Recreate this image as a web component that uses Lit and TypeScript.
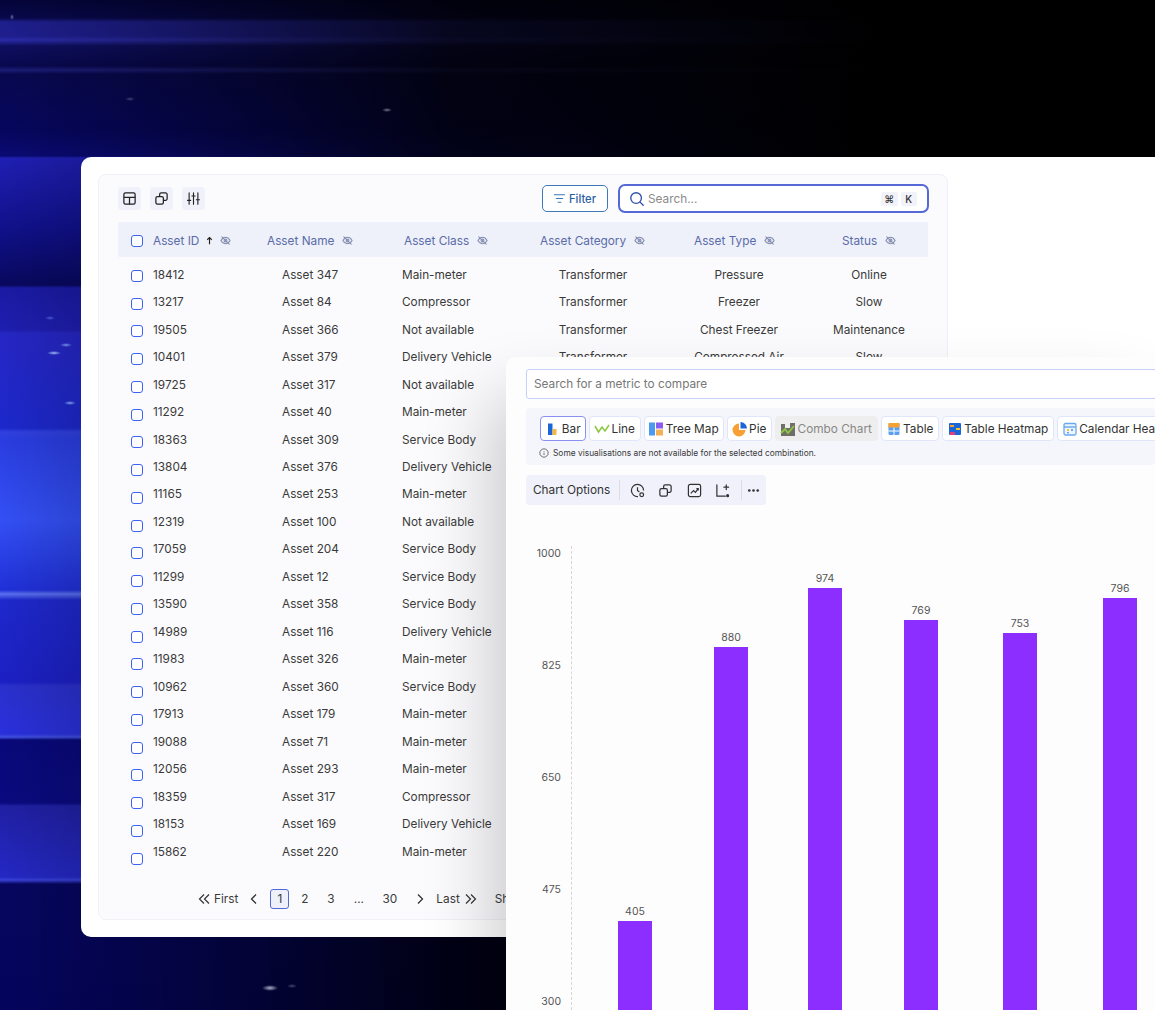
import { css, html, svg, LitElement } from "lit";
import { customElement } from "lit/decorators.js";

const ids = [18412, 13217, 19505, 10401, 19725, 11292, 18363, 13804, 11165, 12319, 17059, 11299, 13590, 14989, 11983, 10962, 17913, 19088, 12056, 18359, 18153, 15862];
const names = [347, 84, 366, 379, 317, 40, 309, 376, 253, 100, 204, 12, 358, 116, 326, 360, 179, 71, 293, 317, 169, 220];
const M = "Main-meter", C = "Compressor", N = "Not available", D = "Delivery Vehicle", S = "Service Body";
const classes = [M, C, N, D, N, M, S, D, M, N, S, S, S, D, M, S, M, M, M, C, D, M];
const types = ["Pressure", "Freezer", "Chest Freezer", "Compressed Air"];
const statuses = ["Online", "Slow", "Maintenance", "Slow"];
const headers = ["Asset Name", "Asset Class", "Asset Category", "Asset Type", "Status"];
const bars = [
  { value: 405, top: 921, gap: 46 },
  { value: 880, top: 647, gap: 62 },
  { value: 974, top: 588, gap: 60 },
  { value: 769, top: 620, gap: 62 },
  { value: 753, top: 633, gap: 65 },
  { value: 796, top: 598, gap: 66 },
];

const eye = html`<svg class="eye" viewBox="0 0 24 24" fill="none" stroke="currentColor" stroke-width="2.4" stroke-linecap="round"><path d="M2 12s4-7 10-7 10 7 10 7-4 7-10 7-10-7-10-7z" /><circle cx="12" cy="12" r="3" /><path d="M4 4l16 16" /></svg>`;
const copy = (c = "i15") => html`<svg class=${c} viewBox="0 0 24 24" fill="none" stroke="currentColor" stroke-width="2" stroke-linejoin="round"><rect x="3" y="9" width="12" height="12" rx="2.5" /><path d="M9 9V5.5A2.5 2.5 0 0 1 11.5 3h7A2.5 2.5 0 0 1 21 5.500v7a2.500 2.500 0 0 1-2.500 2.500H15" /></svg>`;

const chipIcons = {
  bar: svg`<rect x="4" y="2.500" width="4.500" height="11.500" fill="#1a66d8" /><rect x="8.500" y="8" width="4" height="6" fill="#f4b740" />`,
  line: svg`<path d="M1 5l3.500 6L8 6l3 4 4-6" fill="none" stroke="#8cc63f" stroke-width="1.500" />`,
  tree: svg`<rect x="1" y="1.500" width="6" height="13" fill="#4a9af0" /><rect x="8" y="1.500" width="7" height="6" fill="#8a5cf0" /><rect x="8" y="8.500" width="7" height="6" fill="#f4b054" />`,
  pie: svg`<path d="M7 2.500a6.500 6.500 0 1 0 6.500 6.500H7z" fill="#f7a134" /><path d="M8.500 1a6.500 6.500 0 0 1 6.500 6.500H8.500z" fill="#1a66d8" />`,
  combo: svg`<rect x="1" y="3" width="4" height="12" fill="#6f6f68" /><rect x="5" y="7" width="5" height="8" fill="#6f6f68" /><rect x="10" y="2" width="5" height="13" fill="#6f6f68" /><path d="M1 12l4-4 3 4 6-7" fill="none" stroke="#8cc63f" stroke-width="1.800" />`,
  table: svg`<rect x="2.500" y="2" width="11" height="12" rx="1.500" fill="#5aa0f0" /><rect x="2.500" y="2" width="11" height="4.500" fill="#f7a134" /><path d="M2.500 10h11M8 6.500V14" stroke="#fff" />`,
  heat: svg`<rect x="2" y="2" width="12" height="12" rx="1" fill="#1a66d8" /><rect x="3" y="4" width="4" height="2" fill="#f7a134" /><rect x="9" y="7" width="4" height="2" fill="#f4c430" /><rect x="3" y="11" width="5" height="3" fill="#e0407a" />`,
  cal: svg`<rect x="2" y="2.500" width="12" height="11.500" rx="1.500" fill="#eef5ff" stroke="#6aa8f0" stroke-width="1.300" /><path d="M2 6h12" stroke="#6aa8f0" stroke-width="1.300" /><rect x="5" y="8" width="2" height="2" fill="#f4c430" /><rect x="9" y="8" width="2" height="2" fill="#6aa8f0" /><rect x="5" y="11" width="2" height="1.500" fill="#6aa8f0" />`,
};

const chips = [
  { label: "Bar", icon: "bar", w: 46, cls: "active" },
  { label: "Line", icon: "line", w: 52, cls: "" },
  { label: "Tree Map", icon: "tree", w: 80, cls: "" },
  { label: "Pie", icon: "pie", w: 45, cls: "" },
  { label: "Combo Chart", icon: "combo", w: 103, cls: "off" },
  { label: "Table", icon: "table", w: 58, cls: "" },
  { label: "Table Heatmap", icon: "heat", w: 112, cls: "" },
  { label: "Calendar Heatmap", icon: "cal", w: 132, cls: "" },
] as const;

@customElement("app-root")
class AppRoot extends LitElement {
  render() {
    return html`
      <div class="stage">
        <div class="card">
          <div class="inner">
            ${this.renderToolbar()}
            <div class="thead">
              <span class="head-cb"><i class="cb"></i></span>
              <span class="th">Asset ID
                <svg class="arrow" viewBox="0 0 12 12" fill="none" stroke="#222" stroke-width="1.500"><path d="M6 11V2M3 5l3-3 3 3" /></svg>
                ${eye}</span>
              ${headers.map((h) => html`<span class="th">${h} ${eye}</span>`)}
            </div>
            <div class="tbody">
              <div class="cb-col">${ids.map(() => html`<span class="cb-cell"><i class="cb"></i></span>`)}</div>
              <div class="rows">
                ${ids.map(
                  (id, i) => html`<div class="row">
                    <span>${id}</span>
                    <span>Asset ${names[i]}</span>
                    <span>${classes[i]}</span>
                    <span class="mid">Transformer</span>
                    <span class="mid">${types[i % 4]}</span>
                    <span class="mid">${statuses[i % 4]}</span>
                  </div>`
                )}
              </div>
            </div>
            ${this.renderPager()}
          </div>
        </div>
        ${this.renderChart()}
      </div>
    `;
  }

  renderToolbar() {
    return html`<div class="toolbar">
      <span class="tool">
        <svg class="i15" viewBox="0 0 24 24" fill="none" stroke="currentColor" stroke-width="2"><rect x="3" y="3" width="18" height="18" rx="2.500" /><path d="M3 10h18M12 10v11" /></svg>
      </span>
      <span class="tool">${copy()}</span>
      <span class="tool">
        <svg class="i15" viewBox="0 0 24 24" fill="none" stroke="currentColor" stroke-width="1.800" stroke-linecap="round"><path d="M5 3v18M12 3v18M19 3v18M2.500 15h5M9.500 8h5M16.500 14h5" /></svg>
      </span>
      <span class="spacer"></span>
      <button class="filter">
        <svg class="i13" viewBox="0 0 14 14" fill="none" stroke="#3f78b8" stroke-width="1.200" stroke-linecap="round"><path d="M1.500 3h11M3.500 7h7M5.500 11h3" /></svg>
        Filter
      </button>
      <div class="search">
        <svg class="i16" viewBox="0 0 18 18" fill="none" stroke="#2f4fa8" stroke-width="1.500" stroke-linecap="round"><circle cx="8" cy="8" r="6" /><path d="M12.500 12.500L16 16" /></svg>
        <span class="ph">Search...</span>
        <span class="kbd"><b>⌘</b><b>K</b></span>
      </div>
    </div>`;
  }

  renderPager() {
    return html`<div class="pager">
      <svg class="dbl" viewBox="0 0 12 12" fill="none" stroke="#333" stroke-width="1.200"><path d="M6 1.500L1.500 6 6 10.500M11 1.500L6.500 6l4.500 4.500" /></svg>
      <span class="p-first">First</span>
      <svg class="sgl" viewBox="0 0 8 12" fill="none" stroke="#333" stroke-width="1.300"><path d="M6 1.500L1.500 6 6 10.500" /></svg>
      <span class="page on">1</span>
      <span class="page w2">2</span>
      <span class="page w3">3</span>
      <span class="page w4">...</span>
      <span class="page w5">30</span>
      <svg class="sgl nxt" viewBox="0 0 8 12" fill="none" stroke="#333" stroke-width="1.300"><path d="M2 1.500L6.500 6 2 10.500" /></svg>
      <span class="p-last">Last</span>
      <svg class="dbl" viewBox="0 0 12 12" fill="none" stroke="#333" stroke-width="1.200"><path d="M1 1.500L5.500 6 1 10.500M6 1.500L10.500 6 6 10.500" /></svg>
      <span class="p-show">Show 25</span>
    </div>`;
  }

  renderChart() {
    return html`<section class="panel">
      <div class="metric">Search for a metric to compare</div>
      <div class="viz">
        <div class="chips">
          ${chips.map(
            (c) => html`<span class="chip ${c.cls}" style="width:${c.w}px">
              <svg class="i16" viewBox="0 0 16 16">${chipIcons[c.icon]}</svg>${c.label}
            </span>`
          )}
        </div>
        <div class="note">
          <svg class="i10" viewBox="0 0 12 12" fill="none" stroke="#555" stroke-width="1"><circle cx="6" cy="6" r="5" /><path d="M6 5.500v3M6 3.500v.8" /></svg>
          Some visualisations are not available for the selected combination.
        </div>
      </div>
      <div class="options">
        <span class="opt-label">Chart Options</span>
        <i class="sep first"></i>
        <svg class="i15" viewBox="0 0 16 16" fill="none" stroke="currentColor" stroke-width="1.300"><path d="M8.500 14.500A6.500 6.500 0 1 1 14.500 8" /><path d="M8 4.500V8l2 1.500" /><circle cx="12.500" cy="12.500" r="2" /></svg>
        ${copy("i15")}
        <svg class="i15" viewBox="0 0 16 16" fill="none" stroke="currentColor" stroke-width="1.300"><rect x="1.500" y="1.500" width="13" height="13" rx="2" /><path d="M4 11l3-3 2 2 3-4M10 6h2v2" /></svg>
        <svg class="i15" viewBox="0 0 16 16" fill="none" stroke="currentColor" stroke-width="1.300" stroke-linecap="round"><path d="M2 2v12h9" /><path d="M12 2v5M9.500 4.500h5" /><circle cx="13.500" cy="13.500" r="1" fill="currentColor" /></svg>
        <i class="sep last"></i>
        <svg class="i15" viewBox="0 0 16 16" fill="#333"><circle cx="3.500" cy="8" r="1.400" /><circle cx="8" cy="8" r="1.400" /><circle cx="12.500" cy="8" r="1.400" /></svg>
      </div>
      <div class="chart">
        <div class="yaxis">${["1000", "825", "650", "475", "300"].map((t) => html`<span>${t}</span>`)}</div>
        <div class="plot">
          ${bars.map(
            (b) => html`<div class="bar" style="margin-left:${b.gap}px">
              <span>${b.value}</span>
              <i style="height:${1010 - b.top}px"></i>
            </div>`
          )}
        </div>
      </div>
    </section>`;
  }

  static styles = css`
    :host {
      display: block;
      font-family: Inter, "Liberation Sans", sans-serif;
      font-size: 11.800px;
      color: #3a3a3a;
    }

    .stage {
      position: relative;
      width: 1155px;
      height: 1010px;
      overflow: hidden;
      display: flow-root;
      background:
        radial-gradient(ellipse 5px 2px at 387px 110px, rgba(190, 190, 220, 0.6), transparent),
        radial-gradient(ellipse 5px 2px at 130px 99px, rgba(170, 170, 210, 0.35), transparent),
        radial-gradient(ellipse 2px 3px at 12px 17px, rgba(170, 170, 230, 0.6), transparent),
        radial-gradient(ellipse 8px 3px at 270px 988px, rgba(220, 220, 240, 0.8), transparent),
        radial-gradient(ellipse 5px 2px at 292px 986px, rgba(170, 170, 210, 0.4), transparent),
        radial-gradient(ellipse 7px 2px at 54px 353px, rgba(170, 205, 255, 0.9), transparent),
        radial-gradient(ellipse 6px 2px at 66px 345px, rgba(150, 190, 255, 0.7), transparent),
        radial-gradient(ellipse 6px 2px at 70px 403px, rgba(150, 190, 255, 0.8), transparent),
        radial-gradient(ellipse 5px 2px at 50px 318px, rgba(120, 150, 255, 0.5), transparent),
        linear-gradient(90deg, transparent 0, rgba(0, 0, 0, 0.3) 180px, rgba(0, 0, 0, 0.78) 450px, #000 880px),
        linear-gradient(
          180deg,
          #04043a 0,
          #08084c 18px,
          #1e1e8c 22px,
          #1e1e90 36px,
          #2a2aa8 40px,
          #0e0e60 46px,
          #080850 66px,
          #1c1c78 70px,
          #080850 74px,
          #06065e 130px,
          #0a0a74 156px,
          #1f1fb4 158px,
          #10108a 230px,
          #08085e 285px,
          #1a1aa4 288px,
          #1e1eb0 330px,
          #2626c4 333px,
          #1c28cc 428px,
          #3040e0 432px,
          #2a3de0 440px,
          #3350f5 520px,
          #2030d8 590px,
          #5a70f0 594px,
          #1e28cc 600px,
          #1c20c4 682px,
          #2a30cc 686px,
          #2a30dc 734px,
          #4050e0 737px,
          #08087a 740px,
          #0a0a80 803px,
          #2020a4 806px,
          #2428c4 877px,
          #3840d8 880px,
          #060660 884px,
          #04045e 1010px
        );
    }

    .card {
      margin: 157px 0 0 81px;
      height: 780px;
      padding: 17px;
      box-sizing: border-box;
      background: #fff;
      border-radius: 10px 0 0 10px;
    }

    .inner {
      width: 850px;
      height: 746px;
      box-sizing: border-box;
      padding: 9px 19px 0;
      background: #fbfbfd;
      border: 1px solid #f0f1f6;
      border-radius: 8px;
    }

    .toolbar {
      display: flex;
      align-items: center;
      height: 29px;
    }

    .tool {
      display: flex;
      align-items: center;
      justify-content: center;
      width: 23px;
      height: 23px;
      margin-right: 9px;
      background: #f0f1fa;
      border-radius: 4px;
      color: #222;
    }

    .spacer {
      flex: 1;
    }

    .i16 { width: 16px; height: 16px; flex: none; }
    .i15 { width: 15px; height: 15px; flex: none; }
    .i13 { width: 13px; height: 13px; flex: none; }
    .i10 { width: 10px; height: 10px; flex: none; }

    .filter {
      display: flex;
      align-items: center;
      gap: 3px;
      width: 66px;
      height: 27px;
      box-sizing: border-box;
      padding: 0 0 0 10px;
      margin-right: 10px;
      background: #fff;
      border: 1px solid #3f78b8;
      border-radius: 5px;
      font: 500 11.200px Inter, sans-serif;
      color: #2b5fa0;
    }

    .search {
      display: flex;
      align-items: center;
      width: 311px;
      height: 29px;
      box-sizing: border-box;
      padding: 0 10px 0 9px;
      margin-right: -1px;
      gap: 3px;
      background: #fff;
      border: 2px solid #5568d6;
      border-radius: 7px;
    }

    .ph {
      flex: 1;
      color: #8a8a8a;
    }

    .kbd {
      display: flex;
      gap: 3px;
    }

    .kbd b {
      width: 16.500px;
      text-align: center;
      background: #f1f2fa;
      border-radius: 2px;
      font: 500 10px Inter, "DejaVu Sans", sans-serif;
      line-height: 14px;
      color: #333;
    }

    .thead {
      display: grid;
      grid-template-columns: 35px 114px 137px 136px 154px 148px 1fr;
      align-items: center;
      height: 35px;
      box-sizing: border-box;
      padding-top: 2px;
      margin-top: 9px;
      background: #eef0fa;
      border-radius: 2px;
      color: #5a6ca8;
    }

    .th {
      display: flex;
      align-items: center;
      gap: 5px;
      white-space: nowrap;
    }

    .head-cb {
      padding-left: 13px;
      display: flex;
    }

    .eye {
      width: 11px;
      height: 11px;
      margin-left: 3px;
      color: #8690b0;
    }

    .arrow {
      width: 9px;
      height: 9px;
      margin-left: 1px;
      margin-right: -2px;
    }

    .cb {
      display: block;
      width: 12px;
      height: 12px;
      box-sizing: border-box;
      border: 1.500px solid #3c62f5;
      border-radius: 3px;
      background: #fff;
    }

    .tbody {
      display: flex;
      padding-left: 13px;
      margin-top: 5px;
    }

    .cb-col {
      width: 22px;
    }

    .cb-cell {
      display: flex;
      align-items: center;
      height: 27.760px;
    }

    .rows {
      margin-top: -1px;
    }

    .row {
      display: grid;
      grid-template-columns: 129px 120px 120px 142px 150px 110px;
      align-items: center;
      height: 27.480px;
      white-space: nowrap;
    }

    .mid {
      text-align: center;
    }

    .pager {
      display: flex;
      align-items: center;
      height: 20px;
      margin-top: 16px;
      padding-left: 80px;
      white-space: nowrap;
    }

    .dbl { width: 12px; height: 12px; flex: none; }
    .sgl { width: 8px; height: 12px; flex: none; }
    .p-first { margin: 0 12px 0 4px; }
    .nxt { margin-left: 17px; }
    .p-last { margin: 0 5px 0 12px; }
    .p-show { margin-left: 18px; }

    .page {
      text-align: center;
      width: 19px;
      line-height: 20px;
    }

    .on {
      box-sizing: border-box;
      margin-left: 12px;
      height: 20px;
      line-height: 18px;
      background: #eef0fa;
      border: 1px solid #5568d6;
      border-radius: 3px;
    }

    .w2 { margin-left: 6px; }
    .w3 { margin-left: 7px; }
    .w4 { margin-left: 9px; }
    .w5 { margin-left: 12px; }

    .panel {
      position: absolute;
      left: 506px;
      top: 357px;
      right: 0;
      bottom: 0;
      padding: 12px 0 0 20px;
      box-sizing: border-box;
      overflow: hidden;
      background: #fdfdfd;
      border-radius: 10px 0 0 0;
      box-shadow: -14px 40px 70px rgba(0, 0, 0, 0.2);
      clip-path: inset(-80px 0 0 -100px);
    }

    .metric {
      height: 30px;
      box-sizing: border-box;
      margin-right: -20px;
      padding-left: 7px;
      line-height: 28px;
      background: #fff;
      border: 1px solid #c6cff5;
      border-radius: 3px;
      color: #777;
    }

    .viz {
      height: 57px;
      box-sizing: border-box;
      margin-top: 9px;
      padding: 8px 0 0 14px;
      background: #f5f6fc;
      border-radius: 4px;
    }

    .chips {
      display: flex;
      gap: 3px;
    }

    .chip {
      display: flex;
      align-items: center;
      justify-content: center;
      flex: none;
      gap: 1.500px;
      height: 25px;
      box-sizing: border-box;
      padding-right: 1px;
      background: #fff;
      border: 1px solid #e0e5fa;
      border-radius: 4px;
      white-space: nowrap;
      color: #333;
    }

    .chip.active {
      border-color: #8a8ff0;
    }

    .chip.off {
      background: #eee;
      border-color: #eee;
      color: #888;
    }

    .note {
      display: flex;
      align-items: center;
      gap: 4px;
      margin-top: 5px;
      margin-left: -1px;
      padding-top: 1px;
      font-size: 8.400px;
      line-height: 12px;
      white-space: nowrap;
      color: #3a3a3a;
    }

    .options {
      display: flex;
      align-items: center;
      gap: 13.500px;
      width: 240px;
      height: 30px;
      box-sizing: border-box;
      margin-top: 10px;
      padding-left: 7px;
      background: #f0f1fa;
      border-radius: 4px;
      white-space: nowrap;
      color: #333;
    }

    .opt-label {
      margin-right: -4.500px;
    }

    .sep {
      width: 1px;
      height: 20px;
      background: #dcdde6;
    }

    .sep.first { margin-right: -4px; }
    .sep.last { margin-left: -2.500px; margin-right: -9.500px; }

    .chart {
      display: flex;
      margin-top: 41px;
    }

    .yaxis {
      display: flex;
      flex: none;
      flex-direction: column;
      gap: 98px;
      width: 35px;
      margin-right: 10px;
      padding-top: 1px;
      text-align: right;
      font-size: 10.500px;
      line-height: 14px;
      color: #555;
    }

    .plot {
      display: flex;
      align-items: flex-end;
      height: 464px;
      flex: none;
      width: 590px;
      border-left: 1px dashed #d6d6d6;
    }

    .bar {
      display: flex;
      flex-direction: column;
      align-items: center;
      width: 34px;
      flex: none;
      font-size: 10.500px;
      line-height: 14px;
      color: #555;
    }

    .bar span {
      margin-bottom: 2px;
    }

    .bar i {
      display: block;
      width: 100%;
      background: #8b2eff;
    }
  `;
}
